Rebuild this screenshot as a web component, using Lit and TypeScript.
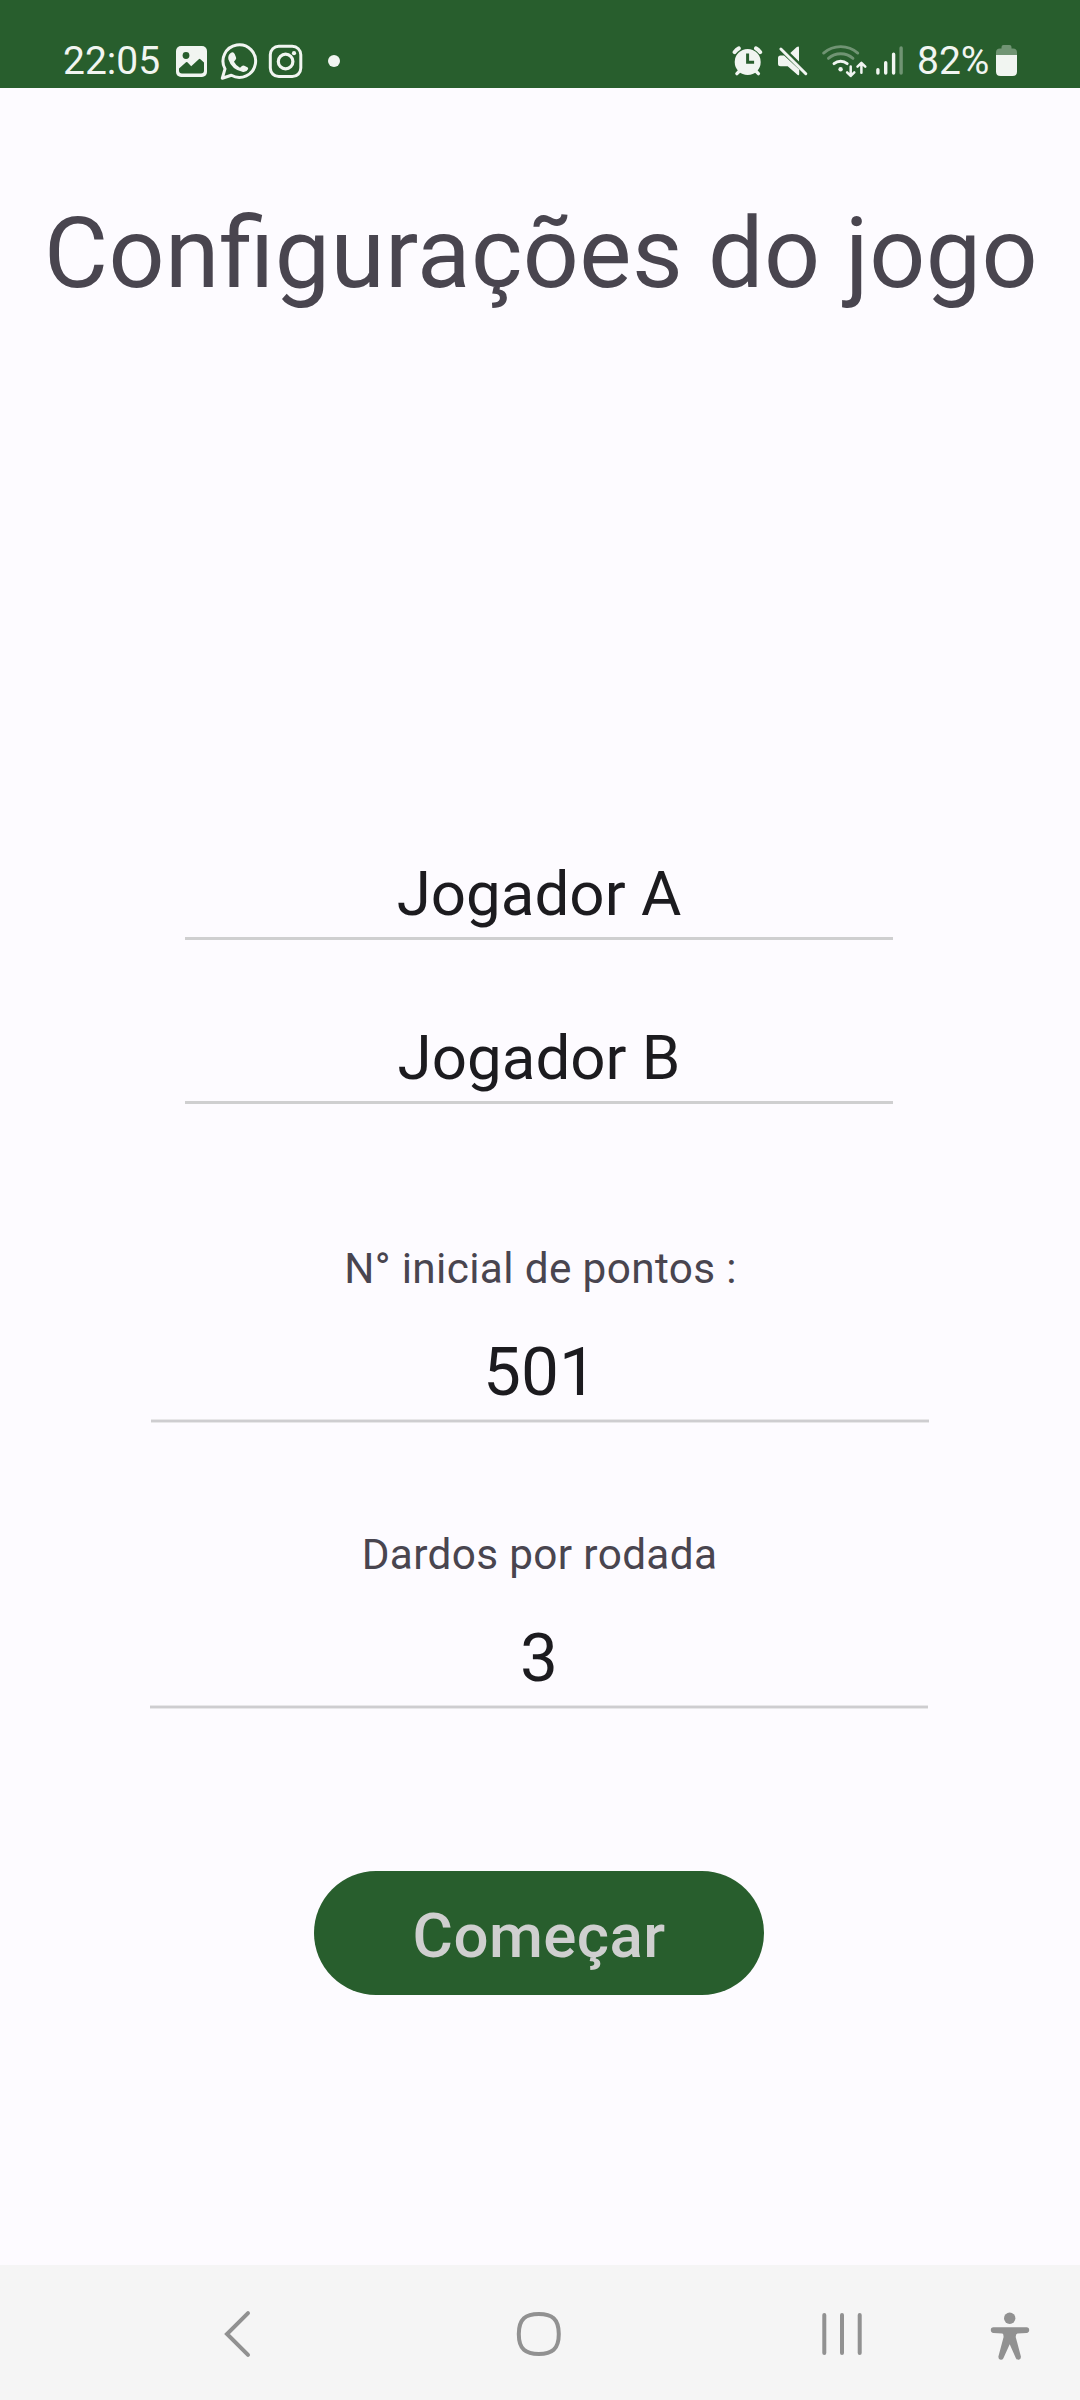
import { LitElement, html, css } from "lit";
import { customElement, property } from "lit/decorators.js";

@customElement("status-bar")
class StatusBar extends LitElement {
  static styles = css`
    :host { display: flex; box-sizing: border-box; height: 88px; padding: 40px 63px 0 63px; background: #285e2d; color: #f1f5f1; justify-content: space-between; align-items: flex-start; }
    .group { display: flex; height: 44px; }
    svg { display: block; height: 44px; fill: #f1f5f1; flex: none; }
    .time, .pct { font: 400 39px/44px Roboto, "Liberation Sans", sans-serif; white-space: nowrap; height: 44px; margin-top: -1px; }
    .time { width: 112px; }
    .pct { width: 79px; }
    .line { fill: none; stroke: #f1f5f1; stroke-linecap: round; stroke-linejoin: round; }
    .dim { opacity: 0.36; }
    .cut { fill: #285e2d; }
    .cutline { fill: none; stroke: #285e2d; }
  `;
  render() {
    return html`
      <div class="group">
        <div class="time">22:05</div>
        <svg width="165" viewBox="175 40 165 44">
          <rect x="176" y="46" width="31" height="31" rx="5" />
          <circle class="cut" cx="186" cy="55.5" r="3.4" />
          <path class="cut" d="M179 68.500l7-6.200q.7-.6 1.400 0l3.800 3.900 7.600-7q.8-.7 1.600 0l3.600 3.400v7.900q0 3-3 3h-19q-3 0-3-3z" />
          <path class="line" stroke-width="3" d="M222.300 78.200l2.700-9.300a16.300 16.300 0 1 1 6.300 6.400z" />
          <path transform="translate(40 20) scale(.33333)" d="M573 98q8-3 11 4l4 10q2 5-2 8l-4 5q6 12 18 18l6-5q3-3 7-1l9 5q4 2 2 6-4 9-15 8-34-6-44-38-2-14 8-20z" />
          <rect class="line" stroke-width="3" x="270.300" y="46.300" width="30.500" height="30.300" rx="8.500" />
          <circle class="line" stroke-width="3.200" cx="285.600" cy="61.500" r="7.300" />
          <circle cx="294" cy="53.200" r="2.100" />
          <circle cx="334" cy="61" r="6" />
        </svg>
      </div>
      <div class="group">
        <svg width="185" viewBox="732 40 185 44">
          <circle cx="747.700" cy="62" r="13" />
          <path class="line" stroke-width="4" d="M734.600 52.200q2-2.800 4.200-3.800M760.200 52.200q-2-2.800-4.200-3.800" />
          <path class="line" stroke-width="3.400" d="M739.500 71l-2.600 2.600M755.800 71l2.600 2.600" />
          <path class="cutline" stroke-width="3" d="M747.600 53.500v8.700h6.500" />
          <path d="M799 47.700v13.800l-8.700-8.600 6.500-5.800q2.200-1.600 2.200.6z" />
          <path d="M780.500 55.600h3.500l15.200 14v4.500q0 1.800-1.500.8l-10-8.600h-7.200q-2.500 0-2.500-2.500v-5.700q0-2.500 2.500-2.500z" />
          <path class="line" stroke-width="3" d="M780.900 49L805.800 73.700" />
          <path class="line dim" stroke-width="2.800" d="M823.600 53.100a26 26 0 0 1 34.200 0M828.400 58.400a18.600 18.600 0 0 1 24.600 0" />
          <path class="line" stroke-width="2.900" d="M834 63.600a10.500 10.500 0 0 1 13.200 0" />
          <circle cx="840.600" cy="69.200" r="2.200" />
          <path class="line" stroke-width="2.500" d="M850.700 66.600v9M847.100 72.300l3.600 3.700 3.600-3.700M861.400 72.800v-9.300M857.500 66.700l3.900-3.900 3.900 3.900" />
          <path class="line" stroke-width="3.400" d="M877.900 69.800v3.300M885.700 62.700v10.400M893.600 54.200v18.900" />
          <path class="line dim" stroke-width="3.400" d="M901.100 48v25.100" />
        </svg>
        <div class="pct">82%</div>
        <svg width="21" viewBox="996 40 21 44">
          <path class="dim" d="M996 55v-2.500q0-4 4-4h1.500v-1.500q0-2 2-2h6q2 0 2 2v1.500h1.500q4 0 4 4v2.500z" />
          <path d="M996 55h21v16.500q0 4.500-4.500 4.500h-12q-4.500 0-4.500-4.500z" />
        </svg>
      </div>
    `;
  }
}

@customElement("text-field")
class TextField extends LitElement {
  @property() value = "";
  @property() label = "";
  static styles = css`
    :host { display: flex; flex-direction: column; align-items: stretch; text-align: center; color: #1c1b1f; font-family: Roboto, "Liberation Sans", sans-serif; }
    .value { font-size: 61.875px; line-height: 72px; height: 79px; white-space: nowrap; }
    .rule { height: 3px; background: #cfcfd0; }
    .label { font-size: 42.3px; line-height: 50px; height: 88px; color: #49454f; letter-spacing: 0.36px; padding-left: 1px; white-space: nowrap; }
    .number { font-size: 67.5px; line-height: 80px; height: 87px; white-space: nowrap; }
    .soft { height: 2px; background: #cecdd0; border-top: 1px solid #e8e7e9; border-bottom: 1px solid #e8e7e9; }
  `;
  render() {
    return this.label
      ? html`<div class="label">${this.label}</div><div class="number">${this.value}</div><div class="soft"></div>`
      : html`<div class="value">${this.value}</div><div class="rule"></div>`;
  }
}

@customElement("nav-bar")
class NavBar extends LitElement {
  static styles = css`
    :host { display: flex; box-sizing: border-box; height: 135px; padding: 42px 48px 0 222px; background: #f5f5f5; }
    svg { display: block; height: 54px; fill: #919191; flex: none; }
    .home { margin-left: 264px; }
    .recents { margin-left: 258px; }
    .access { margin-left: 126px; }
    .line { fill: none; stroke: #919191; stroke-width: 4; stroke-linecap: round; stroke-linejoin: miter; }
  `;
  render() {
    return html`
      <svg width="30" viewBox="222 2307 30 54"><path class="line" d="M248 2313.200L227 2334l21 20.800" /></svg>
      <svg class="home" width="46" viewBox="516 2307 46 54"><path class="line" d="M538.800 2314c13 0 20 4.500 20 20s-7 20-20 20-20-4.500-20-20 7-20 20-20z" /></svg>
      <svg class="recents" width="44" viewBox="820 2307 44 54"><path class="line" d="M824.300 2315v38M842 2315v38M859.700 2315v38" /></svg>
      <svg class="access" width="42" viewBox="990 2307 42 54">
        <circle cx="1009.700" cy="2318.300" r="5.700" />
        <path d="M993.500 2327.300h33q2.700 0 2.700 2.800t-2.700 2.800l-9 .7q-1.800.3-1.800 3.400l5.200 19.500q.2 2.900-2.300 3.300-1.700.2-2.700-1.600l-6.200-14-6.300 14q-1 1.800-2.700 1.600-2.500-.4-2.300-3.300l5.200-19.500q0-3.100-1.200-3.400l-8.900-.7q-2.700 0-2.700-2.800t2.700-2.800z" />
      </svg>
    `;
  }
}

@customElement("app-root")
class AppRoot extends LitElement {
  static styles = css`
    :host { display: flex; flex-direction: column; width: 1080px; height: 2400px; background: #fdfbff; font-family: Roboto, "Liberation Sans", sans-serif; overflow: hidden; }
    .content { flex: 1; display: flex; flex-direction: column; align-items: center; padding-top: 108px; }
    .title { margin: 0; padding-left: 2px; font-size: 98.44px; line-height: 116px; font-weight: 400; color: #49454f; letter-spacing: 0.4px; font-feature-settings: "liga" 1; white-space: nowrap; }
    .player { width: 708px; margin-right: 2px; }
    .first { margin-top: 546px; }
    .second { margin-top: 82px; }
    .points { width: 778px; margin-top: 140px; }
    .darts { width: 778px; margin-top: 107px; margin-right: 2px; }
    .start { width: 450px; height: 124px; margin: 162px 2px 0 0; padding: 6px 0 0; box-sizing: border-box; border: 0; border-radius: 62px; background: #285e2d; color: #cfcfcf; font: 500 61.875px/72px Roboto, "Liberation Sans", sans-serif; letter-spacing: 0.4px; text-align: center; }
  `;
  render() {
    return html`
      <status-bar></status-bar>
      <main class="content">
        <h1 class="title">Configurações do jogo</h1>
        <text-field class="player first" value="Jogador A"></text-field>
        <text-field class="player second" value="Jogador B"></text-field>
        <text-field class="points" label="N° inicial de pontos :" value="501"></text-field>
        <text-field class="darts" label="Dardos por rodada" value="3"></text-field>
        <button class="start">Começar</button>
      </main>
      <nav-bar></nav-bar>
    `;
  }
}
